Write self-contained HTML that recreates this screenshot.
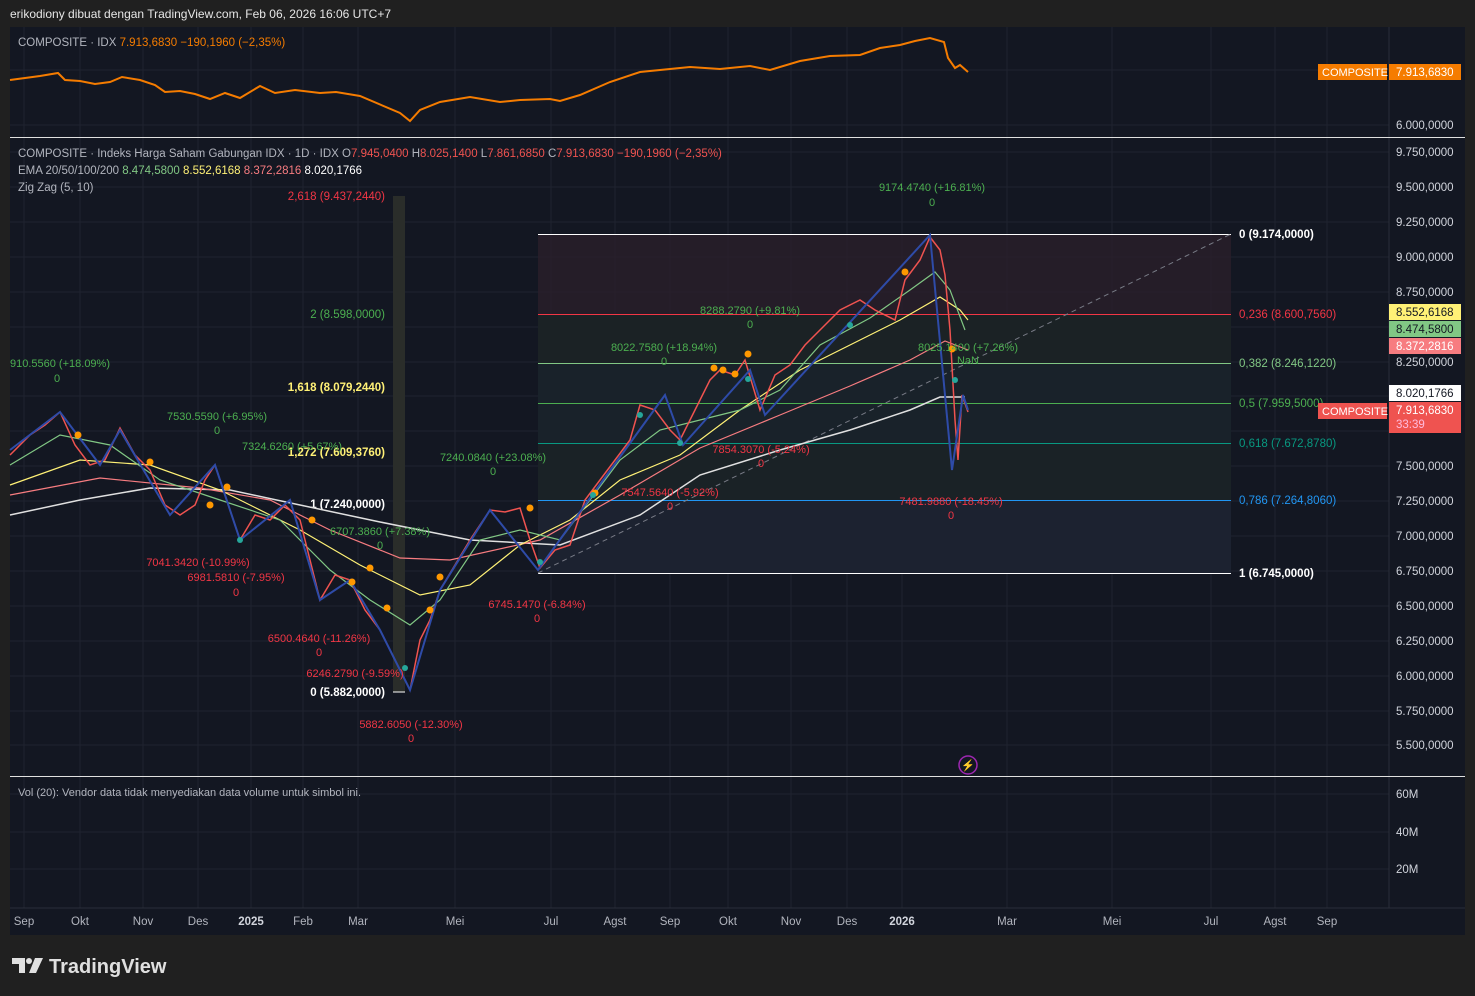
<!DOCTYPE html>
<html><head><meta charset="utf-8"><style>
html,body{margin:0;padding:0;background:#202020;width:1475px;height:996px;overflow:hidden;font-family:"Liberation Sans",sans-serif}
svg text{font-family:"Liberation Sans",sans-serif}
</style></head><body>
<svg width="1475" height="996" xmlns="http://www.w3.org/2000/svg" font-size="11.5">
<rect width="1475" height="996" fill="#202020"/>
<text x="10" y="18" fill="#e6e6e6" font-size="12">erikodiony dibuat dengan TradingView.com, Feb 06, 2026 16:06 UTC+7</text>
<rect x="10" y="27" width="1455" height="908" fill="#131722"/>
<!-- grid -->
<g stroke="#1f2330" stroke-width="1">
<line x1="24" y1="27" x2="24" y2="908"/><line x1="80" y1="27" x2="80" y2="908"/><line x1="143" y1="27" x2="143" y2="908"/><line x1="198" y1="27" x2="198" y2="908"/><line x1="251" y1="27" x2="251" y2="908"/><line x1="303" y1="27" x2="303" y2="908"/><line x1="358" y1="27" x2="358" y2="908"/><line x1="455" y1="27" x2="455" y2="908"/><line x1="551" y1="27" x2="551" y2="908"/><line x1="615" y1="27" x2="615" y2="908"/><line x1="670" y1="27" x2="670" y2="908"/><line x1="728" y1="27" x2="728" y2="908"/><line x1="791" y1="27" x2="791" y2="908"/><line x1="847" y1="27" x2="847" y2="908"/><line x1="902" y1="27" x2="902" y2="908"/><line x1="1007" y1="27" x2="1007" y2="908"/><line x1="1112" y1="27" x2="1112" y2="908"/><line x1="1211" y1="27" x2="1211" y2="908"/><line x1="1275" y1="27" x2="1275" y2="908"/><line x1="1327" y1="27" x2="1327" y2="908"/>
<line x1="10" y1="70" x2="1389" y2="70"/><line x1="10" y1="125" x2="1389" y2="125"/>
<line x1="10" y1="152" x2="1389" y2="152"/><line x1="10" y1="187" x2="1389" y2="187"/><line x1="10" y1="222" x2="1389" y2="222"/><line x1="10" y1="257" x2="1389" y2="257"/><line x1="10" y1="292" x2="1389" y2="292"/><line x1="10" y1="327" x2="1389" y2="327"/><line x1="10" y1="362" x2="1389" y2="362"/><line x1="10" y1="396" x2="1389" y2="396"/><line x1="10" y1="431" x2="1389" y2="431"/><line x1="10" y1="466" x2="1389" y2="466"/><line x1="10" y1="501" x2="1389" y2="501"/><line x1="10" y1="536" x2="1389" y2="536"/><line x1="10" y1="571" x2="1389" y2="571"/><line x1="10" y1="606" x2="1389" y2="606"/><line x1="10" y1="641" x2="1389" y2="641"/><line x1="10" y1="676" x2="1389" y2="676"/><line x1="10" y1="711" x2="1389" y2="711"/><line x1="10" y1="745" x2="1389" y2="745"/>
<line x1="10" y1="794" x2="1389" y2="794"/><line x1="10" y1="832" x2="1389" y2="832"/><line x1="10" y1="869" x2="1389" y2="869"/>
</g>
<!-- axis separators -->
<line x1="1389" y1="27" x2="1389" y2="908" stroke="#2a2e39"/>
<line x1="10" y1="908" x2="1465" y2="908" stroke="#2a2e39"/>
<line x1="10" y1="137.5" x2="1465" y2="137.5" stroke="#e0e0e0"/>
<line x1="10" y1="776.5" x2="1465" y2="776.5" stroke="#e0e0e0"/>
<!-- top pane -->
<text x="18" y="46" fill="#b2b5be">COMPOSITE · IDX <tspan fill="#f57c00">7.913,6830  −190,1960 (−2,35%)</tspan></text>
<polyline fill="none" stroke="#f57c00" stroke-width="2" points="10,80 25,78 40,76 58,73 65,80 80,81 95,84 110,82 122,77 140,80 155,85 165,92 180,91 195,94 210,99 225,93 240,98 260,86 275,93 295,90 320,93 336,92 360,96 400,113 410,121 420,110 440,102 470,97 500,102 520,100 550,99 560,101 580,95 610,82 640,72 660,70 690,67 720,69 750,66 770,70 800,61 830,56 860,55 880,48 900,45 915,41 930,38 944,42 948,58 955,68 960,65 968,72"/>
<rect x="1318" y="64" width="69" height="16" fill="#f57c00"/><text x="1322" y="76" fill="#fff" font-size="11">COMPOSITE</text>
<rect x="1389" y="64" width="72" height="16" fill="#f57c00"/><text x="1396" y="76" fill="#fff" font-size="11.5">7.913,6830</text>
<text x="1396" y="129" fill="#d1d4dc">6.000,0000</text>
<!-- legend -->
<text x="18" y="157" fill="#b2b5be">COMPOSITE · Indeks Harga Saham Gabungan IDX · 1D · IDX  O<tspan fill="#ef5350">7.945,0400</tspan>  H<tspan fill="#ef5350">8.025,1400</tspan>  L<tspan fill="#ef5350">7.861,6850</tspan>  C<tspan fill="#ef5350">7.913,6830  −190,1960 (−2,35%)</tspan></text>
<text x="18" y="174" fill="#b2b5be">EMA 20/50/100/200  <tspan fill="#81c784">8.474,5800</tspan>  <tspan fill="#fff176">8.552,6168</tspan>  <tspan fill="#f77c80">8.372,2816</tspan>  <tspan fill="#fff">8.020,1766</tspan></text>
<text x="18" y="191" fill="#b2b5be">Zig Zag (5, 10)</text>
<!-- fib box right -->
<rect x="538" y="234" width="693" height="80" fill="#2a1f2a" opacity="0.8"/>
<rect x="538" y="314" width="693" height="49" fill="#1b2225"/>
<rect x="538" y="363" width="693" height="80" fill="#19222a"/>
<rect x="538" y="443" width="693" height="57" fill="#1a2226"/>
<rect x="538" y="500" width="693" height="73" fill="#1c2230"/>
<line x1="538" y1="234.5" x2="1231" y2="234.5" stroke="#fff"/>
<line x1="538" y1="314.5" x2="1231" y2="314.5" stroke="#f23645"/>
<line x1="538" y1="363.5" x2="1231" y2="363.5" stroke="#81c784"/>
<line x1="538" y1="403.5" x2="1231" y2="403.5" stroke="#4caf50"/>
<line x1="538" y1="443.5" x2="1231" y2="443.5" stroke="#089981"/>
<line x1="538" y1="500.5" x2="1231" y2="500.5" stroke="#2196f3"/>
<line x1="538" y1="573.5" x2="1231" y2="573.5" stroke="#fff"/>
<line x1="538" y1="573" x2="1231" y2="234" stroke="#787b86" stroke-dasharray="5,4"/>
<g font-size="11.5">
<text x="1239" y="238" fill="#fff" font-weight="bold">0 (9.174,0000)</text>
<text x="1239" y="318" fill="#f23645">0,236 (8.600,7560)</text>
<text x="1239" y="367" fill="#81c784">0,382 (8.246,1220)</text>
<text x="1239" y="407" fill="#4caf50">0,5 (7.959,5000)</text>
<text x="1239" y="447" fill="#089981">0,618 (7.672,8780)</text>
<text x="1239" y="504" fill="#2196f3">0,786 (7.264,8060)</text>
<text x="1239" y="577" fill="#fff" font-weight="bold">1 (6.745,0000)</text>
</g>
<!-- left fib -->
<rect x="393" y="196" width="12" height="496" fill="#2a2d2a"/>
<line x1="393" y1="692" x2="405" y2="692" stroke="#fff"/>
<g font-size="11.5">
<text x="385" y="200" fill="#f23645" text-anchor="end">2,618 (9.437,2440)</text>
<text x="385" y="318" fill="#4caf50" text-anchor="end">2 (8.598,0000)</text>
<text x="385" y="391" fill="#fff176" text-anchor="end" font-weight="bold">1,618 (8.079,2440)</text>
<text x="385" y="456" fill="#fff176" text-anchor="end" font-weight="bold">1,272 (7.609,3760)</text>
<text x="385" y="508" fill="#fff" text-anchor="end" font-weight="bold">1 (7.240,0000)</text>
<text x="385" y="696" fill="#fff" text-anchor="end" font-weight="bold">0 (5.882,0000)</text>
</g>
<!-- EMAs -->
<polyline fill="none" stroke="#e0e0e0" stroke-width="1.5" points="10,515 80,500 150,488 230,490 300,505 380,522 470,540 560,545 640,515 700,475 780,450 850,430 910,410 940,397 965,397"/>
<polyline fill="none" stroke="#f77c80" stroke-width="1.2" points="10,495 100,478 200,488 270,500 330,530 400,558 450,560 540,540 620,495 700,448 780,415 850,386 910,360 945,341 968,350"/>
<polyline fill="none" stroke="#fff176" stroke-width="1.2" points="10,485 80,460 150,465 220,490 300,530 360,565 420,595 470,585 520,545 570,520 620,480 680,455 740,410 800,370 860,340 900,320 940,297 960,310 968,320"/>
<polyline fill="none" stroke="#81c784" stroke-width="1.2" points="10,465 60,435 110,445 160,480 220,500 280,520 330,570 370,600 410,625 440,600 480,540 520,530 560,540 590,500 620,460 660,430 700,420 740,410 780,390 820,345 870,318 910,290 935,272 950,290 965,330"/>
<!-- price -->
<polyline fill="none" stroke="#ef5350" stroke-width="1.5" points="10,455 30,435 45,425 60,412 75,445 90,465 105,460 120,428 135,455 150,470 165,505 180,515 195,505 205,480 215,465 225,495 240,540 255,515 270,520 285,505 300,520 310,560 320,600 335,575 350,580 365,610 380,630 395,660 410,690 420,640 430,620 440,590 455,565 470,540 480,525 490,510 505,512 520,508 530,540 540,568 555,550 570,545 585,500 600,480 615,460 630,440 640,405 655,410 670,430 680,440 695,410 710,380 720,370 735,375 745,360 760,410 775,375 790,365 805,345 820,330 840,310 860,300 875,310 895,320 905,280 920,260 930,237 940,250 945,275 950,330 955,420 958,460 962,395 968,412"/>
<polyline fill="none" stroke="#2e4ba8" stroke-width="2" points="10,450 60,412 100,465 120,430 170,515 215,465 240,540 290,500 320,600 350,580 380,630 410,690 440,590 490,510 538,570 585,505 665,395 683,445 750,370 765,415 930,235 952,470 963,395 968,410"/>
<!-- dots -->
<g fill="#ff9800"><circle cx="78" cy="435" r="3.5"/><circle cx="150" cy="462" r="3.5"/><circle cx="227" cy="487" r="3.5"/><circle cx="312" cy="520" r="3.5"/><circle cx="352" cy="582" r="3.5"/><circle cx="370" cy="568" r="3.5"/><circle cx="387" cy="608" r="3.5"/><circle cx="430" cy="610" r="3.5"/><circle cx="440" cy="577" r="3.5"/><circle cx="530" cy="508" r="3.5"/><circle cx="714" cy="368" r="3.5"/><circle cx="723" cy="370" r="3.5"/><circle cx="735" cy="374" r="3.5"/><circle cx="748" cy="354" r="3.5"/><circle cx="905" cy="272" r="3.5"/><circle cx="952" cy="349" r="3.5"/><circle cx="595" cy="493" r="3.5"/><circle cx="210" cy="505" r="3.5"/></g>
<g fill="#26a69a"><circle cx="240" cy="540" r="3"/><circle cx="405" cy="668" r="3"/><circle cx="540" cy="562" r="3"/><circle cx="593" cy="495" r="3"/><circle cx="640" cy="415" r="3"/><circle cx="680" cy="443" r="3"/><circle cx="748" cy="379" r="3"/><circle cx="850" cy="325" r="3"/><circle cx="955" cy="380" r="3"/></g>
<!-- zigzag labels -->
<g font-size="11" text-anchor="middle">
<text x="932" y="191" fill="#4caf50">9174.4740 (+16.81%)</text><text x="932" y="206" fill="#4caf50">0</text>
<text x="750" y="314" fill="#4caf50">8288.2790 (+9.81%)</text><text x="750" y="328" fill="#4caf50">0</text>
<text x="664" y="351" fill="#4caf50">8022.7580 (+18.94%)</text><text x="664" y="365" fill="#4caf50">0</text>
<text x="968" y="351" fill="#4caf50">8025.1400 (+7.26%)</text><text x="968" y="364" fill="#4caf50">NaN</text>
<text x="60" y="367" fill="#4caf50">910.5560 (+18.09%)</text><text x="57" y="382" fill="#4caf50">0</text>
<text x="217" y="420" fill="#4caf50">7530.5590 (+6.95%)</text><text x="217" y="434" fill="#4caf50">0</text>
<text x="292" y="450" fill="#4caf50">7324.6260 (+5.67%)</text>
<text x="493" y="461" fill="#4caf50">7240.0840 (+23.08%)</text><text x="493" y="475" fill="#4caf50">0</text>
<text x="380" y="535" fill="#4caf50">6707.3860 (+7.38%)</text><text x="380" y="549" fill="#4caf50">0</text>
<text x="761" y="453" fill="#f23645">7854.3070 (-5.24%)</text><text x="761" y="467" fill="#f23645">0</text>
<text x="670" y="496" fill="#f23645">7547.5640 (-5.92%)</text><text x="670" y="510" fill="#f23645">0</text>
<text x="951" y="505" fill="#f23645">7481.9880 (-18.45%)</text><text x="951" y="519" fill="#f23645">0</text>
<text x="198" y="566" fill="#f23645">7041.3420 (-10.99%)</text>
<text x="236" y="581" fill="#f23645">6981.5810 (-7.95%)</text><text x="236" y="596" fill="#f23645">0</text>
<text x="537" y="608" fill="#f23645">6745.1470 (-6.84%)</text><text x="537" y="622" fill="#f23645">0</text>
<text x="319" y="642" fill="#f23645">6500.4640 (-11.26%)</text><text x="319" y="656" fill="#f23645">0</text>
<text x="355" y="677" fill="#f23645">6246.2790 (-9.59%)</text>
<text x="411" y="728" fill="#f23645">5882.6050 (-12.30%)</text><text x="411" y="742" fill="#f23645">0</text>
</g>
<circle cx="968" cy="765" r="9" fill="none" stroke="#9c27b0" stroke-width="1.5"/><text x="968" y="769" fill="#9c27b0" text-anchor="middle" font-size="11">⚡</text>
<!-- price axis -->
<g fill="#d1d4dc" font-size="11.5">
<text x="1396" y="156">9.750,0000</text><text x="1396" y="191">9.500,0000</text><text x="1396" y="226">9.250,0000</text><text x="1396" y="261">9.000,0000</text><text x="1396" y="296">8.750,0000</text><text x="1396" y="366">8.250,0000</text><text x="1396" y="470">7.500,0000</text><text x="1396" y="505">7.250,0000</text><text x="1396" y="540">7.000,0000</text><text x="1396" y="575">6.750,0000</text><text x="1396" y="610">6.500,0000</text><text x="1396" y="645">6.250,0000</text><text x="1396" y="680">6.000,0000</text><text x="1396" y="715">5.750,0000</text><text x="1396" y="749">5.500,0000</text>
<text x="1396" y="798">60M</text><text x="1396" y="836">40M</text><text x="1396" y="873">20M</text>
</g>
<rect x="1389" y="304" width="72" height="16" fill="#fff176"/><text x="1396" y="316" fill="#131722">8.552,6168</text>
<rect x="1389" y="321" width="72" height="16" fill="#81c784"/><text x="1396" y="333" fill="#131722">8.474,5800</text>
<rect x="1389" y="338" width="72" height="16" fill="#f77c80"/><text x="1396" y="350" fill="#fff">8.372,2816</text>
<rect x="1389" y="385" width="72" height="16" fill="#fff"/><text x="1396" y="397" fill="#131722">8.020,1766</text>
<rect x="1318" y="403" width="69" height="16" fill="#ef5350"/><text x="1322" y="415" fill="#fff" font-size="11">COMPOSITE</text>
<rect x="1389" y="402" width="72" height="31" fill="#ef5350"/><text x="1396" y="414" fill="#fff">7.913,6830</text><text x="1396" y="428" fill="#fbd">33:39</text>
<text x="18" y="796" fill="#b2b5be" font-size="11">Vol (20): Vendor data tidak menyediakan data volume untuk simbol ini.</text>
<!-- time axis -->
<g fill="#b2b5be" font-size="11.5" text-anchor="middle">
<text x="24" y="925">Sep</text><text x="80" y="925">Okt</text><text x="143" y="925">Nov</text><text x="198" y="925">Des</text><text x="251" y="925" font-weight="bold" fill="#d1d4dc">2025</text><text x="303" y="925">Feb</text><text x="358" y="925">Mar</text><text x="455" y="925">Mei</text><text x="551" y="925">Jul</text><text x="615" y="925">Agst</text><text x="670" y="925">Sep</text><text x="728" y="925">Okt</text><text x="791" y="925">Nov</text><text x="847" y="925">Des</text><text x="902" y="925" font-weight="bold" fill="#d1d4dc">2026</text><text x="1007" y="925">Mar</text><text x="1112" y="925">Mei</text><text x="1211" y="925">Jul</text><text x="1275" y="925">Agst</text><text x="1327" y="925">Sep</text>
</g>
<!-- logo -->
<path d="M12 958h13v15h-6v-9h-7z" fill="#e0e0e0"/><circle cx="29" cy="961" r="3" fill="#e0e0e0"/><path d="M35 958h8l-7 15h-7z" fill="#e0e0e0"/>
<text x="49" y="973" fill="#e0e0e0" font-size="20" font-weight="bold">TradingView</text>
</svg>
</body></html>
